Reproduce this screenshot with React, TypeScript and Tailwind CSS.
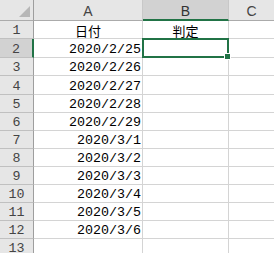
import React from "react";

const rows: { n: number; a: string; b: string; label?: boolean }[] = [
  { n: 1, a: "日付", b: "判定", label: true },
  { n: 2, a: "2020/2/25", b: "" },
  { n: 3, a: "2020/2/26", b: "" },
  { n: 4, a: "2020/2/27", b: "" },
  { n: 5, a: "2020/2/28", b: "" },
  { n: 6, a: "2020/2/29", b: "" },
  { n: 7, a: "2020/3/1", b: "" },
  { n: 8, a: "2020/3/2", b: "" },
  { n: 9, a: "2020/3/3", b: "" },
  { n: 10, a: "2020/3/4", b: "" },
  { n: 11, a: "2020/3/5", b: "" },
  { n: 12, a: "2020/3/6", b: "" },
  { n: 13, a: "", b: "" },
];

const mono = "font-['Liberation_Mono','DejaVu_Sans_Mono',monospace] text-[13.33px] leading-none";
const cjk = "font-['Noto_Sans_CJK_JP','Noto_Sans',sans-serif] text-[13px] leading-none";

export default function App() {
  return (
    <div className="h-[253px] w-[274px] overflow-hidden bg-white">
      {/* row heights as measured off the sheet: mostly 18, rows 2 and 4 are 19 */}
      <div className="grid grid-cols-[34px_109px_86px_1fr] grid-rows-[21px_18px_19px_18px_19px_18px_18px_18px_18px_18px_18px_18px_18px_18px]">
        {/* corner */}
        <div className="relative border-b border-r border-b-[#ababab] border-r-[#9e9e9e] bg-[#e6e6e6]">
          <svg className="absolute bottom-[3px] right-[3px]" width="11" height="11" viewBox="0 0 11 11">
            <polygon points="11,0 11,11 0,11" fill="#b7b7b7" />
          </svg>
        </div>
        {/* column headers */}
        <div className="flex items-end justify-center border-b border-r border-b-[#ababab] border-r-[#c8c8c8] bg-[#e6e6e6] pb-[2px] font-['Liberation_Sans',sans-serif] text-[14px] leading-none text-[#444]">
          A
        </div>
        <div className="flex items-end justify-center border-b-2 border-r border-b-[#217346] border-r-[#c8c8c8] bg-[#d2d2d2] pb-[1px] font-['Liberation_Sans',sans-serif] text-[14px] leading-none text-[#333]">
          B
        </div>
        <div className="flex items-end justify-center border-b border-b-[#ababab] bg-[#e6e6e6] pb-[2px] font-['Liberation_Sans',sans-serif] text-[14px] leading-none text-[#444]">
          C
        </div>

        {rows.map((r) => {
          const sel = r.n === 2;
          return (
            <React.Fragment key={r.n}>
              <div
                className={`flex items-end justify-center border-b pb-[1px] ${mono} text-[#444] ${
                  sel
                    ? "border-r-2 border-b-[#c0c0c0] border-r-[#217346] bg-[#d2d2d2]"
                    : "border-r border-b-[#c0c0c0] border-r-[#9e9e9e] bg-[#e6e6e6]"
                }`}
              >
                {r.n}
              </div>
              <div
                className={`flex items-end border-b border-r border-[#d4d4d4] pb-[1px] text-black ${
                  r.label ? `justify-center ${cjk}` : `justify-end pr-[1px] ${mono}`
                }`}
              >
                {r.a}
              </div>
              <div
                className={`relative flex items-end justify-center border-b border-r border-[#d4d4d4] pb-[1px] text-black ${cjk}`}
              >
                {r.b}
                {sel && (
                  <>
                    <div className="absolute -left-px -top-px h-[20px] w-[87px] border-2 border-[#217346]" />
                    <div className="absolute -bottom-[3px] -right-[3px] z-10 h-[7px] w-[7px] border border-white bg-[#217346]" />
                  </>
                )}
              </div>
              <div className="border-b border-[#d4d4d4]" />
            </React.Fragment>
          );
        })}
      </div>
    </div>
  );
}
